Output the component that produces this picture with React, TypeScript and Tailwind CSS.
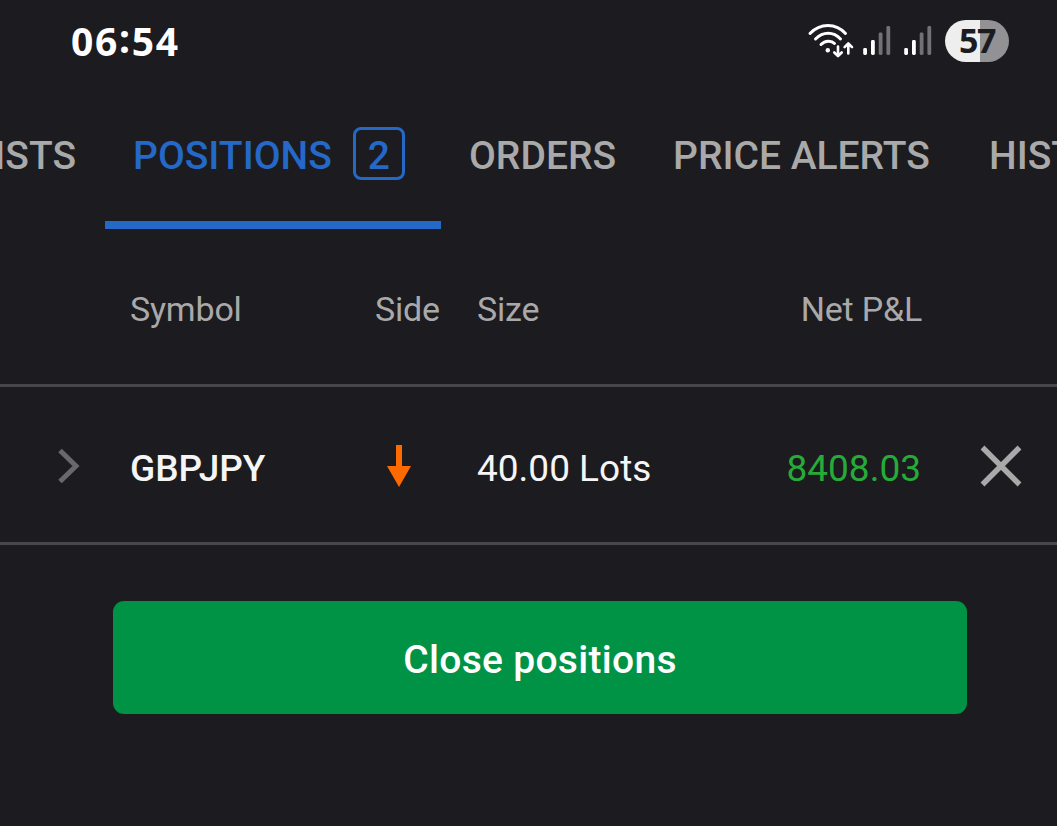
import type { ReactNode } from "react"

function WifiIcon() {
  return (
    <svg width="48" height="38" viewBox="0 0 48 38" fill="none" stroke="#fff" strokeWidth="3" strokeLinecap="round" strokeLinejoin="round">
      <path d="M3 11.5C13 0.8 29 0.8 38.5 11.5" />
      <path d="M8.5 17C16 9.2 26.5 9.2 33.5 17" />
      <path d="M14 22.5C18.2 18.3 24.5 18.3 27.5 21.5" />
      <circle cx="20.8" cy="28.2" r="2.2" fill="#fff" stroke="none" />
      <path d="M31 24.5V33.5M27.3 30.5L31 34.2L34.7 30.5" strokeWidth="2.6" />
      <path d="M41.3 31.5V22M37.6 25.2L41.3 21.5L45 25.2" strokeWidth="2.6" />
    </svg>
  )
}

function SignalIcon() {
  return (
    <svg width="28" height="32" viewBox="0 0 28 32">
      <rect x="0.2" y="23" width="3.8" height="7" rx="1.4" fill="#fff" />
      <rect x="8" y="15" width="3.8" height="15" rx="1.4" fill="#fff" />
      <rect x="15.7" y="7.5" width="3.8" height="22.5" rx="1.4" fill="#727275" />
      <rect x="23.4" y="1" width="3.8" height="29" rx="1.4" fill="#727275" />
    </svg>
  )
}

function StatusBar() {
  return (
    <div className="flex h-[83px] items-center justify-between pr-12 pb-0.5 pl-[71px]">
      <div className="flex pb-px font-['Noto_Sans',sans-serif] text-[39px] leading-none font-bold tracking-[1.7px] text-white">
        <span>06</span>
        <span className="-mt-[3px]">:</span>
        <span>54</span>
      </div>
      <div className="flex items-center">
        <WifiIcon />
        <div className="ml-[8px]">
          <SignalIcon />
        </div>
        <div className="ml-[13px]">
          <SignalIcon />
        </div>
        <div className="ml-[13px] flex h-[42px] w-16 items-center justify-center rounded-full bg-linear-to-r from-[#eeeeee] from-55% to-[#929294] to-55% pb-px font-['Noto_Sans',sans-serif] text-[34px] font-bold tracking-[-1.5px] text-[#1c1b1f]">
          57
        </div>
      </div>
    </div>
  )
}

function Tab({ className, children }: { className: string; children: ReactNode }) {
  return (
    <button className={`flex h-[146px] shrink-0 items-center overflow-hidden whitespace-nowrap ${className}`}>
      {children}
    </button>
  )
}

function Tabs() {
  return (
    <nav className="flex overflow-hidden text-[39px] font-medium text-[#a9a9a9]">
      <Tab className="w-[105px] justify-end pr-[29px]">WATCHLISTS</Tab>
      <Tab className="w-[336px] border-b-8 border-[#2468c8] pt-2 pl-[28px] text-[#2468c8]">
        POSITIONS
        <span className="mb-[5px] ml-[21px] flex h-[53px] w-[52px] items-center justify-center rounded-lg border-3 border-[#2468c8] pt-[5px]">
          2
        </span>
      </Tab>
      <Tab className="w-[204px] pl-[28px]">ORDERS</Tab>
      <Tab className="w-[314px] pl-[28px]">PRICE ALERTS</Tab>
      <Tab className="w-[200px] pl-[30px]">HISTORY</Tab>
    </nav>
  )
}

function App() {
  return (
    <div className="h-[826px] w-[1057px] overflow-hidden bg-[#1c1b1f] font-['Roboto',sans-serif]">
      <StatusBar />
      <Tabs />
      <main>
        <div className="flex h-[158px] items-center border-b-3 border-[#46464c] pt-1.5 pr-[135px] pl-[130px] text-[34px] tracking-[-0.2px] text-[#a9a9a9]">
          <span className="w-[245px]">Symbol</span>
          <span className="w-[102px]">Side</span>
          <span>Size</span>
          <span className="ml-auto">Net P&amp;L</span>
        </div>

        <div className="flex h-[158px] items-center border-b-3 border-[#48484b] pt-1.5 pr-[35px] pl-[57px] text-[37px] text-[#f5f5f5]">
          <svg className="mb-1" width="23" height="36" viewBox="0 0 23 36" fill="none" stroke="#69696b" strokeWidth="5">
            <path d="M3 2.5L19 18L3 33.5" />
          </svg>
          <span className="mt-0.5 ml-[50px] w-[257px] font-medium">GBPJPY</span>
          <svg className="mb-1" width="24" height="42" viewBox="0 0 24 42" fill="#ff6a00">
            <path d="M9 0H15V21H24L12 42L0 21H9Z" />
          </svg>
          <span className="mt-0.5 ml-[66px]">40.00 Lots</span>
          <span className="mt-0.5 ml-auto text-[#26ab38]">8408.03</span>
          <svg className="mb-1 ml-[59px]" width="42" height="42" viewBox="0 0 42 42" stroke="#a9a9a9" strokeWidth="5.5">
            <path d="M2.5 2.5L39.5 39.5M39.5 2.5L2.5 39.5" />
          </svg>
        </div>

        <button className="mt-14 ml-[113px] flex h-[113px] w-[854px] items-center justify-center rounded-[11px] bg-[#009345] pt-1.5 text-[39px] font-medium tracking-[0.3px] text-white">
          Close positions
        </button>
      </main>
    </div>
  )
}

export default App
